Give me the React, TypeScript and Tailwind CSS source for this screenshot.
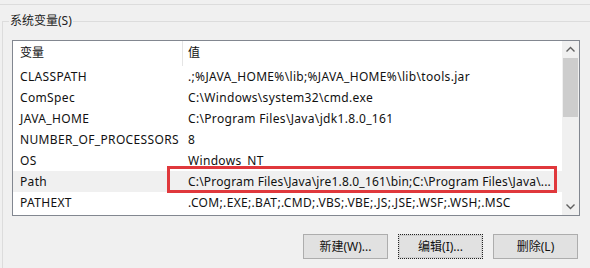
import React from 'react';

const rows: [string, string][] = [
  ['CLASSPATH', '.;%JAVA_HOME%\\lib;%JAVA_HOME%\\lib\\tools.jar'],
  ['ComSpec', 'C:\\Windows\\system32\\cmd.exe'],
  ['JAVA_HOME', 'C:\\Program Files\\Java\\jdk1.8.0_161'],
  ['NUMBER_OF_PROCESSORS', '8'],
  ['OS', 'Windows_NT'],
  ['Path', 'C:\\Program Files\\Java\\jre1.8.0_161\\bin;C:\\Program Files\\Java\\...'],
  ['PATHEXT', '.COM;.EXE;.BAT;.CMD;.VBS;.VBE;.JS;.JSE;.WSF;.WSH;.MSC'],
];

const font = { fontFamily: '"Noto Sans", "Noto Sans CJK SC", sans-serif' };

const App: React.FC = () => {
  return (
    <div className="w-[590px] h-[268px] bg-[#f0f0f0] overflow-hidden text-[12px] text-[#111]" style={font}>
      <div className="h-[4px]" />
      <div className="border-t border-[#dcdcdc]" />
      <div className="relative mt-[16px] ml-[2px] border-t border-l border-[#dcdcdc] h-[300px]">
        <span className="absolute -top-[10px] left-[6px] bg-[#f0f0f0] px-[1px] leading-[18px] text-[#222]">
          系统变量(S)
        </span>
        <div className="ml-[9px] mt-[18px] w-[568px] h-[176px] bg-white border border-[#828790] flex">
          <div className="flex-1 flex flex-col">
            <div className="h-[25px] flex items-center">
              <div className="w-[169px] pl-[7px] pb-[2px]">变量</div>
              <div className="h-full w-px bg-[#e5e5e5]" />
              <div className="pl-[5px] pb-[2px]">值</div>
            </div>
            {rows.map(([k, v]) => (
              <div
                key={k}
                className={`relative h-[21px] flex items-center ${k === 'Path' ? 'bg-[#f0f0f0]' : ''}`}
              >
                <div className="w-[170px] pl-[7px] whitespace-nowrap tracking-[0.35px]">{k}</div>
                <div
                  className={`pl-[5px] whitespace-nowrap ${k === 'Path' ? 'tracking-[0.18px]' : 'tracking-[0.33px]'}`}
                >
                  {v}
                </div>
                {k === 'Path' && (
                  <div className="absolute left-[154px] top-[-5px] w-[390px] h-[27px] border-[3px] border-[#e0383c]" />
                )}
              </div>
            ))}
          </div>
          <div className="w-[17px] bg-[#f0f0f0] flex flex-col items-center">
            <svg width="17" height="17" viewBox="0 0 17 17" className="shrink-0">
              <path d="M4.5 10.5 L8.5 6.5 L12.5 10.5" fill="none" stroke="#606060" strokeWidth="1.4" />
            </svg>
            <div className="w-[15px] h-[59px] bg-[#cdcdcd]" />
            <div className="flex-1" />
            <svg width="17" height="17" viewBox="0 0 17 17" className="shrink-0">
              <path d="M4.5 6.5 L8.5 10.5 L12.5 6.5" fill="none" stroke="#606060" strokeWidth="1.4" />
            </svg>
          </div>
        </div>
        <div className="flex gap-[10px] ml-[300px] mt-[18px]">
          <button className="w-[85px] h-[25px] bg-[#e1e1e1] border border-[#adadad] text-[#111]">新建(W)...</button>
          <button className="w-[85px] h-[25px] bg-[#e1e1e1] border border-dotted border-[#222] text-[#111] shadow-[inset_0_0_0_1px_#d0d0d0]">编辑(I)...</button>
          <button className="w-[85px] h-[25px] bg-[#e1e1e1] border border-[#adadad] text-[#111]">删除(L)</button>
        </div>
      </div>
    </div>
  );
};

export default App;
